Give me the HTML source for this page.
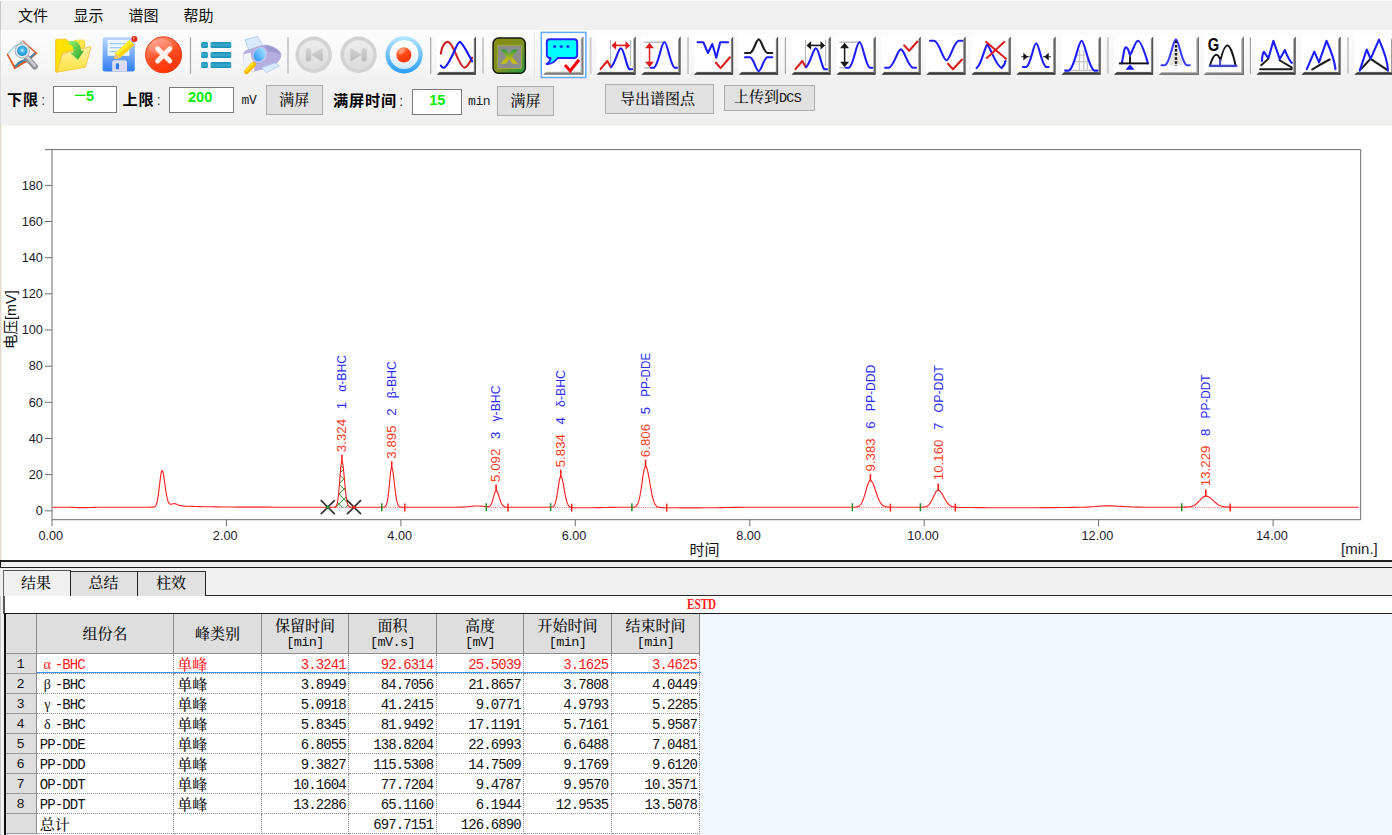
<!DOCTYPE html><html lang="zh"><head><meta charset="utf-8"><title>色谱工作站</title><style>
html,body{margin:0;padding:0}
body{width:1392px;height:835px;overflow:hidden;position:relative;background:#f0f0f0;font-family:'Liberation Sans','Noto Sans CJK SC',sans-serif;color:#000}
.abs{position:absolute}
.menu{position:absolute;top:0;left:0;width:1392px;height:30px;background:#f0f0f0}
.menu span{position:absolute;top:4.5px;font-size:15px;line-height:22px;color:#111;white-space:nowrap}
.song{font-family:'Liberation Mono','Noto Serif CJK SC',serif;font-size:15px;white-space:nowrap}
.lat{font-family:'Liberation Mono',monospace;font-size:13.6px;letter-spacing:-0.66px}
.lbl{position:absolute;font-family:'Liberation Sans','Noto Sans CJK SC',sans-serif;font-weight:bold;font-size:15.2px;letter-spacing:0.8px;line-height:20px;white-space:nowrap;color:#000}
.inp{position:absolute;background:#fff;border:1.2px solid #7a7a7a;box-sizing:border-box;text-align:center;color:#00ee00;font-family:'Liberation Sans',sans-serif;font-weight:bold;font-size:14.6px}
.btn{font-weight:500;position:absolute;background:#e1e1e1;border:1.2px solid #adadad;box-sizing:border-box;text-align:center;font-family:'Liberation Mono','Noto Serif CJK SC',serif;font-size:15px;color:#111;white-space:nowrap}
.unit{position:absolute;font-family:'Liberation Mono',monospace;font-size:13px;letter-spacing:-0.4px;color:#222;white-space:nowrap}
.tab{font-weight:500;position:absolute;box-sizing:border-box;text-align:center;font-family:'Noto Serif CJK SC',serif;font-size:15px;color:#111}
.th{font-weight:500;position:absolute;box-sizing:border-box;background:#dedede;border-right:1.2px solid #8c8c8c;border-bottom:1.2px solid #8c8c8c;text-align:center;font-family:'Liberation Mono','Noto Serif CJK SC',serif;font-size:15px;line-height:17.5px;color:#111;white-space:nowrap;overflow:hidden}
.rh{position:absolute;box-sizing:border-box;background:#dedede;border-right:1.2px solid #8c8c8c;border-bottom:1.2px solid #9a9a9a;text-align:center;font-family:'Liberation Mono',monospace;font-size:13.6px;line-height:20px;padding-top:0.8px;color:#111}
.td{position:absolute;box-sizing:border-box;background:#fff;border-right:1px dotted #8e8e8e;border-bottom:1px dotted #8e8e8e;font-family:'Liberation Mono','Noto Serif CJK SC',serif;font-size:14px;letter-spacing:-0.9px;line-height:20px;padding-top:1px;color:#111;white-space:nowrap;overflow:hidden}
.td.r{text-align:right;padding-right:2.4px}
.td.l{text-align:left;padding-left:3px}
.td .cj{font-weight:500;font-family:'Noto Serif CJK SC',serif;font-size:15px;letter-spacing:0;position:relative;top:-0.5px}
.td .gk{font-family:'Liberation Serif','Noto Serif CJK SC',serif;font-size:14px;letter-spacing:0;display:inline-block;width:15px;text-align:center}
.red{color:#ff1a1a !important}
</style></head><body>
<div class="menu"><div class="abs" style="left:0;top:0;width:1392px;height:1.2px;background:#fafafa"></div><div class="abs" style="left:0;top:1px;width:1px;height:29px;background:#c8c8c8"></div>
<span style="left:18.0px">文件</span>
<span style="left:73.5px">显示</span>
<span style="left:128.5px">谱图</span>
<span style="left:183.5px">帮助</span>
</div>
<svg width="1392" height="50" viewBox="0 30 1392 50" style="position:absolute;left:0;top:30px">
<defs>
<linearGradient id="shr" x1="0" x2="1" y1="0" y2="0"><stop offset="0" stop-color="#bdbdbd"/><stop offset="0.5" stop-color="#6a6a6a"/><stop offset="1" stop-color="#383838"/></linearGradient>
<linearGradient id="shb" x1="0" x2="0" y1="0" y2="1"><stop offset="0" stop-color="#9a9a9a"/><stop offset="0.45" stop-color="#3e3e3e"/><stop offset="1" stop-color="#2a2a2a"/></linearGradient>
<linearGradient id="shr2" x1="0" x2="1" y1="0" y2="0"><stop offset="0" stop-color="#d8d8d8"/><stop offset="1" stop-color="#5a5a5a"/></linearGradient>
<linearGradient id="shb2" x1="0" x2="0" y1="0" y2="1"><stop offset="0" stop-color="#d0d0d0"/><stop offset="1" stop-color="#505050"/></linearGradient>
<linearGradient id="shs" x1="0" x2="1" y1="0" y2="1"><stop offset="0" stop-color="#eee"/><stop offset="1" stop-color="#888"/></linearGradient>
<linearGradient id="tbg" x1="0" x2="0" y1="0" y2="1"><stop offset="0" stop-color="#fcfcfc"/><stop offset="0.75" stop-color="#f6f6f6"/><stop offset="1" stop-color="#f0f0f0"/></linearGradient>
<linearGradient id="redc" x1="0.2" x2="0.7" y1="0" y2="1"><stop offset="0" stop-color="#ff9a80"/><stop offset="0.55" stop-color="#ff4a20"/><stop offset="1" stop-color="#ff3000"/></linearGradient>
<linearGradient id="flop" x1="0" x2="0" y1="0" y2="1"><stop offset="0" stop-color="#bcd8ff"/><stop offset="1" stop-color="#2f7df0"/></linearGradient>
<linearGradient id="ring" x1="0" x2="0" y1="0" y2="1"><stop offset="0" stop-color="#b8e6ff"/><stop offset="1" stop-color="#2a9cf6"/></linearGradient>
<linearGradient id="ringin" x1="0" x2="0" y1="0" y2="1"><stop offset="0" stop-color="#ffffff"/><stop offset="0.5" stop-color="#ffffff"/><stop offset="1" stop-color="#cfe6ff"/></linearGradient>
<linearGradient id="dot" x1="0.2" x2="0.8" y1="0" y2="1"><stop offset="0" stop-color="#ff9066"/><stop offset="0.5" stop-color="#ff4612"/><stop offset="1" stop-color="#ff3200"/></linearGradient>
<linearGradient id="xl" x1="0" x2="1" y1="0" y2="1"><stop offset="0" stop-color="#8a8c12"/><stop offset="0.55" stop-color="#7d9020"/><stop offset="1" stop-color="#1fa048"/></linearGradient>
<linearGradient id="xg" x1="0" x2="0" y1="0" y2="1"><stop offset="0" stop-color="#2fa048"/><stop offset="0.6" stop-color="#b4b418"/><stop offset="1" stop-color="#c8c010"/></linearGradient>
<linearGradient id="dis" x1="0" x2="0" y1="0" y2="1"><stop offset="0" stop-color="#ececec"/><stop offset="1" stop-color="#dcdcdc"/></linearGradient>
<linearGradient id="disg" x1="0" x2="0" y1="0" y2="1"><stop offset="0" stop-color="#d2d2d2"/><stop offset="1" stop-color="#bcbcbc"/></linearGradient>
<linearGradient id="fold" x1="0" x2="0" y1="0" y2="1"><stop offset="0" stop-color="#fff2a8"/><stop offset="1" stop-color="#ffe23c"/></linearGradient>
<linearGradient id="grn" x1="0" x2="1" y1="0" y2="1"><stop offset="0" stop-color="#9cf070"/><stop offset="1" stop-color="#1fa020"/></linearGradient>
<radialGradient id="lens" cx="0.5" cy="0.45" r="0.6"><stop offset="0" stop-color="#d8f2ff"/><stop offset="0.35" stop-color="#4ab4e6"/><stop offset="1" stop-color="#1690c8"/></radialGradient>
<linearGradient id="lens2" x1="0.7" x2="0.3" y1="0" y2="1"><stop offset="0" stop-color="#a8e4ff"/><stop offset="1" stop-color="#2a96ff"/></linearGradient>
<linearGradient id="teal" x1="0" x2="0" y1="0" y2="1"><stop offset="0" stop-color="#178cb4"/><stop offset="0.5" stop-color="#3aaccc"/><stop offset="1" stop-color="#178cb4"/></linearGradient>
</defs>
<rect x="0" y="30" width="1392" height="50" fill="url(#tbg)"/>
<rect x="0" y="30" width="1" height="50" fill="#dcdcdc"/>
<rect x="189.9" y="37.3" width="1.2" height="36.4" fill="#a8a8a8"/>
<rect x="287.0" y="37.3" width="2" height="36.4" fill="#cdcdcd"/>
<rect x="430.1" y="37.3" width="1.2" height="36.4" fill="#a8a8a8"/>
<rect x="482.0" y="37.3" width="2" height="36.4" fill="#cdcdcd"/>
<rect x="589.6" y="37.3" width="2" height="36.4" fill="#cdcdcd"/>
<rect x="687.0" y="37.3" width="2" height="36.4" fill="#cdcdcd"/>
<rect x="784.8" y="37.3" width="1.2" height="36.4" fill="#a8a8a8"/>
<rect x="1106.9" y="37.3" width="2" height="36.4" fill="#cdcdcd"/>
<rect x="1249.8" y="37.3" width="1.2" height="36.4" fill="#a8a8a8"/>
<rect x="1347.0" y="37.3" width="2" height="36.4" fill="#cdcdcd"/>
<rect x="533.8" y="32" width="1" height="46" fill="#e4e4e4"/>
<g><path d="M6.6 54.3L22.9 40.2L37.6 53.3L29.4 60.4L14.4 69.6Z" fill="#e0622c"/><path d="M8 53.8L14.5 46.2C17 45 20.6 44.2 22.6 41.4L34.4 52.4C32 55.4 29.6 56.6 26.8 59.2C21.6 59.6 17.8 61.6 14.9 65.8Z" fill="#f6f8fa"/><path d="M14.9 65.8C17.8 61.6 21.6 59.6 26.8 59.2C29.6 56.6 32 55.4 34.4 52.4L35.6 53.6C33.4 56.6 31 58 28.6 60.6C23.4 61.2 19 63.4 15.8 67.8Z" fill="#2a88b2"/><path d="M8 53.8L14.5 46.2C17 45 20.6 44.2 22.6 41.4" fill="none" stroke="#9ccfe4" stroke-width="1.3"/><path d="M27 57.8L34.8 66.6" stroke="#8c9096" stroke-width="6" stroke-linecap="round"/><path d="M27.2 57L34.8 65.6" stroke="#c8ccd0" stroke-width="2.8" stroke-linecap="round"/><circle cx="22.3" cy="50.8" r="7.2" fill="#eceef2" stroke="#b2b6bc" stroke-width="1.1"/><circle cx="22.3" cy="50.8" r="5.3" fill="url(#lens)"/></g>
<g><path d="M55.6 40.5Q55.6 39.2 57 39.2L66.5 39.2L68.5 41.6L84.6 41.6L84.8 47L62 53L57.2 72L55.6 72Z" fill="#ffe200" stroke="#f2c030" stroke-width="0.9"/><path d="M74 40L84 39.6L84.4 47L74 49Z" fill="#ffe84a"/><path d="M62.6 53.8L91 46.6L85.4 67.2L56.8 72.2Z" fill="url(#fold)" stroke="#f0c440" stroke-width="0.9"/><path d="M69 41.2C75 39.5 80.5 42 81.2 51L84.2 50.6L78 59.8L70.2 53L73.6 52.4C73.6 47 72 44.5 68.6 44Z" fill="url(#grn)"/></g>
<g><rect x="102.6" y="37.3" width="32.2" height="34.3" rx="2.4" fill="url(#flop)"/><rect x="107.6" y="40" width="21.8" height="15.8" fill="#eef6ff"/><path d="M109.6 43.6H127.4M109.6 47.6H127.4M109.6 51.6H127.4" stroke="#9ccaf8" stroke-width="1.4"/><path d="M112.2 62.4Q112.2 60.2 114.4 60.2H124.8Q127 60.2 127 62.4V71.6H112.2Z" fill="#dcdcf6"/><rect x="115.8" y="63.4" width="3.2" height="5.8" fill="#2f7df0"/><path d="M114.2 58.9L115.2 53L129.6 40L134.4 44.8L120 58Z" fill="#ffd400"/><path d="M115.2 53L129.6 40L132 42.4L117.6 55.4Z" fill="#ffee30"/><path d="M114.2 58.9L115.2 53L120 58Z" fill="#f0c080"/><path d="M130.2 40.6L131.8 39.2L135.2 42.8L133.8 44.2Z" fill="#c8ccd8"/><circle cx="134.4" cy="39" r="3" fill="#e0301c"/><circle cx="133.8" cy="38.2" r="1" fill="#ff9080"/></g>
<g><circle cx="163.6" cy="54.8" r="18" fill="url(#redc)" stroke="#e83a18" stroke-width="1"/><ellipse cx="161" cy="47" rx="12" ry="8" fill="#fff" opacity="0.18"/><path d="M157.6 48.8L169.8 61M169.8 48.8L157.6 61" stroke="#fff4f0" stroke-width="4.8" stroke-linecap="round"/></g>
<rect x="201.1" y="41.9" width="6.9" height="6.1" rx="1.6" fill="url(#teal)"/><rect x="210.5" y="41.9" width="20.8" height="6.1" rx="1.6" fill="url(#teal)"/>
<rect x="201.1" y="51.9" width="6.9" height="6.1" rx="1.6" fill="url(#teal)"/><rect x="210.5" y="51.9" width="20.8" height="6.1" rx="1.6" fill="url(#teal)"/>
<rect x="201.1" y="62.0" width="6.9" height="6.1" rx="1.6" fill="url(#teal)"/><rect x="210.5" y="62.0" width="20.8" height="6.1" rx="1.6" fill="url(#teal)"/>
<g><path d="M245 39.8L257.4 36.2L262.8 45.2L249 50Z" fill="#dceaff" stroke="#a8c8f4" stroke-width="0.8"/><path d="M243.4 53.6C244 51 247 49.4 250 49L264 45C270 43.6 281.6 50 281.4 55C281.2 60 276 65.4 270 67.4L254.6 71.6C249 72 244 67 243.6 61Z" fill="#b4aede"/><path d="M243.6 54.5L250.4 52.6L254.4 64L254.2 71.4C249 71.6 244.4 67 243.8 61Z" fill="#f2f4fc"/><path d="M262 67.6L274.8 63L279.2 66L266.2 72.6Z" fill="#dceaff" stroke="#a8c8f4" stroke-width="0.8"/><path d="M264 46C270 45 279.5 50 280.4 54.6C277 52.5 270 51 265.6 52Z" fill="#9c98d0"/><path d="M253.6 64.2L246.6 71.6" stroke="#ffb800" stroke-width="5" stroke-linecap="round"/><path d="M253 63.6L246.4 70.4" stroke="#ffe000" stroke-width="2.4" stroke-linecap="round"/><ellipse cx="259.8" cy="54.8" rx="7.8" ry="9" transform="rotate(28 259.8 54.8)" fill="#c4c0e8" stroke="#a8a4d6" stroke-width="0.8"/><ellipse cx="259.6" cy="54.6" rx="5.6" ry="7" transform="rotate(28 259.6 54.6)" fill="url(#lens2)"/></g>
<g><circle cx="313.7" cy="54.8" r="18.2" fill="#d2d2d2"/><circle cx="313.7" cy="54.8" r="14.6" fill="url(#dis)"/><rect x="305.8" y="48" width="5.4" height="13.6" rx="2.4" fill="url(#disg)"/><path d="M311.9 54.8L322.2 48.6V61Z" fill="url(#disg)" stroke="url(#disg)" stroke-width="1" stroke-linejoin="round"/></g>
<g><circle cx="358.6" cy="54.8" r="18.2" fill="#d2d2d2"/><circle cx="358.6" cy="54.8" r="14.6" fill="url(#dis)"/><rect x="361.4" y="48" width="5.4" height="13.6" rx="2.4" fill="url(#disg)"/><path d="M360.8 54.8L350.8 48.6V61Z" fill="url(#disg)" stroke="url(#disg)" stroke-width="1" stroke-linejoin="round"/></g>
<g><circle cx="404.1" cy="54.8" r="18.6" fill="url(#ring)"/><circle cx="404.1" cy="54.6" r="14.4" fill="url(#ringin)"/><circle cx="403.8" cy="54.8" r="7.6" fill="url(#dot)"/><ellipse cx="401.6" cy="51.4" rx="3.6" ry="2.4" transform="rotate(-35 401.6 51.4)" fill="#fff" opacity="0.3"/></g>
<g transform="translate(436.8 35.4)"><path d="M36.6 3.9L39.2 1.1V39.2H36.6Z" fill="url(#shr)"/><path d="M0 39.4L3.2 36.1H36.6L39.2 39.4Z" fill="url(#shb)"/><rect x="0" y="0" width="36.6" height="36.3" fill="#fff"/><path d="M4 18.3C5 10 8.5 6.3 11.2 6.5C15 7 18.5 18 21.5 24C24.5 30 26.5 32.4 27.7 32.3C30 32 33 27 35.3 22.3" fill="none" stroke="#c8201e" stroke-width="2.1" stroke-linecap="round" stroke-linejoin="round" /><path d="M4 30.2C5 32 6.5 32.6 7.8 32.1C10 31.4 13.5 24 16.5 18C19.5 11 21.6 6.4 23 6.5C25.6 7 31 18 35.3 25.9" fill="none" stroke="#1414ff" stroke-width="2.1" stroke-linecap="round" stroke-linejoin="round" /></g>
<g><rect x="493.1" y="38.1" width="32.2" height="35.2" rx="5.4" fill="url(#xl)" stroke="#141a10" stroke-width="1.5"/><rect x="497.6" y="45.2" width="23.8" height="23.3" fill="#8c8c8c" stroke="#a0a838" stroke-width="0.9"/><path d="M500.6 49.6H506L509.3 54.2L512.6 49.6H518L512.2 56.7L518 63.8H512.6L509.3 59.2L506 63.8H500.6L506.4 56.7Z" fill="url(#xg)"/></g>
<rect x="541.3" y="32.4" width="44.6" height="45.1" fill="#fff" stroke="#62aaff" stroke-width="1.5"/>
<g transform="translate(543.4 35.2)"><path d="M37 4.2L39.9 1.2V39.4H0L3 36.4H37Z" fill="url(#shs)"/><path d="M37 4.2L39.9 1.2V39.4H37Z" fill="url(#shr2)"/><path d="M0 39.4L3 36.4H37L39.9 39.4Z" fill="url(#shb2)"/><rect x="0" y="0" width="37" height="36.4" fill="#fff"/><path d="M6.6 4H30.6Q33.8 4 33.8 7.2V19.6Q33.8 22.8 30.6 22.8H14.2C11.5 26.5 7.6 29.2 3.2 28.8C6 27 7 25 7.2 22.8H6.6Q3.4 22.8 3.4 19.6V7.2Q3.4 4 6.6 4Z" fill="#00ffff" stroke="#2424ff" stroke-width="1.9" stroke-linejoin="round"/><circle cx="11.2" cy="11.3" r="1.6" fill="#1c3cff"/><circle cx="17.9" cy="11.3" r="1.6" fill="#1c3cff"/><circle cx="24.5" cy="11.3" r="1.6" fill="#1c3cff"/><path d="M21.6 29.8L26.8 35.8L35.6 24.6" fill="none" stroke="#ff0000" stroke-width="3" stroke-linejoin="miter"/></g>
<g transform="translate(596.5 35.4)"><path d="M36.6 3.9L39.2 1.1V39.2H36.6Z" fill="url(#shr)"/><path d="M0 39.4L3.2 36.1H36.6L39.2 39.4Z" fill="url(#shb)"/><rect x="0" y="0" width="36.6" height="36.3" fill="#fff"/><path d="M14 4.7V30.5M34.1 4.7V30.5" stroke="#b4bac0" stroke-width="1.1" fill="none"/><path d="M4 33.8L10.8 25.6L14.4 31.8" fill="none" stroke="#dc1c1c" stroke-width="2.1" stroke-linecap="round" stroke-linejoin="round" /><path d="M14.4 31.8C19 28 21.5 13 24.4 13C27.5 13 29.5 30 32.7 33.8H35.6" fill="none" stroke="#1d1dff" stroke-width="2.1" stroke-linecap="round" stroke-linejoin="round" /><path d="M18 10H31" stroke="#dc1c1c" stroke-width="1.6"/><path d="M15 10L19.6 5.6V14.4ZM33.6 10L29 5.6V14.4Z" fill="#dc1c1c"/></g>
<g transform="translate(641.4 35.4)"><path d="M36.6 3.9L39.2 1.1V39.2H36.6Z" fill="url(#shr)"/><path d="M0 39.4L3.2 36.1H36.6L39.2 39.4Z" fill="url(#shb)"/><rect x="0" y="0" width="36.6" height="36.3" fill="#fff"/><path d="M2.9 6.8H22.6M2.9 32.3H9.7" stroke="#b8bcc0" stroke-width="1.4" fill="none"/><path d="M9.4 32.3H12.6C17 30 20 6.6 23 6.6C26 6.6 29 30 33.2 32.3H35.8" fill="none" stroke="#1d1dff" stroke-width="2.1" stroke-linecap="round" stroke-linejoin="round" /><path d="M8.1 11V28" stroke="#dc1c1c" stroke-width="1.5"/><path d="M8.1 7.3L12.6 12.8H3.6ZM8.1 31.8L12.6 26.3H3.6Z" fill="#dc1c1c"/></g>
<g transform="translate(694.0 35.4)"><path d="M36.6 3.9L39.2 1.1V39.2H36.6Z" fill="url(#shr)"/><path d="M0 39.4L3.2 36.1H36.6L39.2 39.4Z" fill="url(#shb)"/><rect x="0" y="0" width="36.6" height="36.3" fill="#fff"/><path d="M3.6 6.8H9.3L14 17.6L18.3 8.6L22.3 22.3L26.2 6.8H34.1" fill="none" stroke="#1d1dff" stroke-width="2.1" stroke-linecap="round" stroke-linejoin="round" /><path d="M21.9 27.3L26.6 32.7L35.9 21.9" fill="none" stroke="#dc1c1c" stroke-width="2.1" stroke-linecap="round" stroke-linejoin="round" /></g>
<g transform="translate(738.9 35.4)"><path d="M36.6 3.9L39.2 1.1V39.2H36.6Z" fill="url(#shr)"/><path d="M0 39.4L3.2 36.1H36.6L39.2 39.4Z" fill="url(#shb)"/><rect x="0" y="0" width="36.6" height="36.3" fill="#fff"/><path d="M6.1 17.6H11C15 17 17 4 19.8 4C22.6 4 24.6 17 28.6 17.6H33.4" fill="none" stroke="#1a1a1a" stroke-width="2.1" stroke-linecap="round" stroke-linejoin="round" /><path d="M6.1 21.9H11C15 22.5 17 35.6 19.8 35.6C22.6 35.6 24.6 22.5 28.6 21.9H33.4" fill="none" stroke="#1d1dff" stroke-width="2.1" stroke-linecap="round" stroke-linejoin="round" /></g>
<g transform="translate(791.5 35.4)"><path d="M36.6 3.9L39.2 1.1V39.2H36.6Z" fill="url(#shr)"/><path d="M0 39.4L3.2 36.1H36.6L39.2 39.4Z" fill="url(#shb)"/><rect x="0" y="0" width="36.6" height="36.3" fill="#fff"/><path d="M14 4.7V30.5M34.1 4.7V30.5" stroke="#b4bac0" stroke-width="1.1" fill="none"/><path d="M4 33.8L10.8 25.6L14.4 31.8" fill="none" stroke="#dc1c1c" stroke-width="2.1" stroke-linecap="round" stroke-linejoin="round" /><path d="M14.4 31.8C19 28 21.5 13 24.4 13C27.5 13 29.5 30 32.7 33.8H35.6" fill="none" stroke="#1d1dff" stroke-width="2.1" stroke-linecap="round" stroke-linejoin="round" /><path d="M18 10H31" stroke="#1a1a1a" stroke-width="1.6"/><path d="M15 10L19.6 5.6V14.4ZM33.6 10L29 5.6V14.4Z" fill="#1a1a1a"/></g>
<g transform="translate(836.5 35.4)"><path d="M36.6 3.9L39.2 1.1V39.2H36.6Z" fill="url(#shr)"/><path d="M0 39.4L3.2 36.1H36.6L39.2 39.4Z" fill="url(#shb)"/><rect x="0" y="0" width="36.6" height="36.3" fill="#fff"/><path d="M2.9 6.8H22.6M2.9 32.3H9.7" stroke="#b8bcc0" stroke-width="1.4" fill="none"/><path d="M9.4 32.3H12.6C17 30 20 6.6 23 6.6C26 6.6 29 30 33.2 32.3H35.8" fill="none" stroke="#1d1dff" stroke-width="2.1" stroke-linecap="round" stroke-linejoin="round" /><path d="M8.1 11V28" stroke="#1a1a1a" stroke-width="1.5"/><path d="M8.1 7.3L12.6 12.8H3.6ZM8.1 31.8L12.6 26.3H3.6Z" fill="#1a1a1a"/></g>
<g transform="translate(881.5 35.4)"><path d="M36.6 3.9L39.2 1.1V39.2H36.6Z" fill="url(#shr)"/><path d="M0 39.4L3.2 36.1H36.6L39.2 39.4Z" fill="url(#shb)"/><rect x="0" y="0" width="36.6" height="36.3" fill="#fff"/><path d="M3.6 32.3H7.4C12.5 31 16 14 19.4 14C22.8 14 26.3 31 31.4 32.3H34.5" fill="none" stroke="#1d1dff" stroke-width="2.1" stroke-linecap="round" stroke-linejoin="round" /><path d="M22.6 10L27.7 15.4L35.9 6.1" fill="none" stroke="#dc1c1c" stroke-width="2.1" stroke-linecap="round" stroke-linejoin="round" /></g>
<g transform="translate(926.4 35.4)"><path d="M36.6 3.9L39.2 1.1V39.2H36.6Z" fill="url(#shr)"/><path d="M0 39.4L3.2 36.1H36.6L39.2 39.4Z" fill="url(#shb)"/><rect x="0" y="0" width="36.6" height="36.3" fill="#fff"/><path d="M3.6 5.4H7.8C13 6.5 16.5 24.8 20.1 24.8C23.7 24.8 27.2 6.5 32.4 5.4H35.9" fill="none" stroke="#1d1dff" stroke-width="2.1" stroke-linecap="round" stroke-linejoin="round" /><path d="M21.6 28.4L26.6 33.8L35.6 24.1" fill="none" stroke="#dc1c1c" stroke-width="2.1" stroke-linecap="round" stroke-linejoin="round" /></g>
<g transform="translate(971.5 35.4)"><path d="M36.6 3.9L39.2 1.1V39.2H36.6Z" fill="url(#shr)"/><path d="M0 39.4L3.2 36.1H36.6L39.2 39.4Z" fill="url(#shb)"/><rect x="0" y="0" width="36.6" height="36.3" fill="#fff"/><path d="M5 32.7C10 30 12.8 12 15.8 9C19 12 24 30 30.2 32.7C32 31 33.4 28 34.1 25.5" fill="none" stroke="#1d1dff" stroke-width="2.1" stroke-linecap="round" stroke-linejoin="round" /><path d="M14.7 6.5L34.5 23.3M32.7 6.5L15.4 22.6" fill="none" stroke="#dc1c1c" stroke-width="2.0" stroke-linecap="round" stroke-linejoin="round" /></g>
<g transform="translate(1016.4 35.4)"><path d="M36.6 3.9L39.2 1.1V39.2H36.6Z" fill="url(#shr)"/><path d="M0 39.4L3.2 36.1H36.6L39.2 39.4Z" fill="url(#shb)"/><rect x="0" y="0" width="36.6" height="36.3" fill="#fff"/><path d="M6.5 31.6H9.8C14.5 30 17 7.9 19.8 7.9C22.6 7.9 25.1 30 29.8 31.6H32.3" fill="none" stroke="#1d1dff" stroke-width="2.1" stroke-linecap="round" stroke-linejoin="round" /><path d="M5 21.3H13.3M26.6 21.3H34.5" stroke="#222" stroke-width="1.1"/><path d="M11.3 21.3L7 17.4V25.2ZM28 21.3L32.3 17.4V25.2Z" fill="#111"/></g>
<g transform="translate(1061.5 35.4)"><path d="M36.6 3.9L39.2 1.1V39.2H36.6Z" fill="url(#shr)"/><path d="M0 39.4L3.2 36.1H36.6L39.2 39.4Z" fill="url(#shb)"/><rect x="0" y="0" width="36.6" height="36.3" fill="#fff"/><path d="M18 14.7V35M22.3 14.7V35M25.9 20V35M15.8 19.8H23.7M12.9 26.2H27M8 35H32" stroke="#c4c4c4" stroke-width="1.3" fill="none"/><path d="M3.6 35.2H7.4C13 33 17 5.4 20.1 5.4C23.2 5.4 27.2 33 32.8 35.2H35.9" fill="none" stroke="#1d1dff" stroke-width="2.1" stroke-linecap="round" stroke-linejoin="round" /></g>
<g transform="translate(1114.0 35.4)"><path d="M36.6 3.9L39.2 1.1V39.2H36.6Z" fill="url(#shr)"/><path d="M0 39.4L3.2 36.1H36.6L39.2 39.4Z" fill="url(#shb)"/><rect x="0" y="0" width="36.6" height="36.3" fill="#fff"/><path d="M7.8 28C9.5 20 10 12 12.1 12C14 12 15 17 16 19.8C19 15 21.5 5.4 23.9 5.4C26.5 5.4 31 18 34 28" fill="none" stroke="#1d1dff" stroke-width="2.1" stroke-linecap="round" stroke-linejoin="round" /><path d="M4.9 28H34.3" stroke="#111" stroke-width="1.9"/><path d="M16 20.8V28.4" stroke="#111" stroke-width="1.9"/><path d="M16 29.2L20.6 34.4H11.4Z" fill="#1414ff"/></g>
<g transform="translate(1159.0 35.4)"><path d="M37 4.2L39.9 1.2V39.4H0L3 36.4H37Z" fill="url(#shs)"/><path d="M37 4.2L39.9 1.2V39.4H37Z" fill="url(#shr2)"/><path d="M0 39.4L3 36.4H37L39.9 39.4Z" fill="url(#shb2)"/><rect x="0" y="0" width="37" height="36.4" fill="#fff"/><path d="M16.9 8L24 29.8H9.8Z" fill="#e4e4dc"/><path d="M2.5 29.8H6C11 28.5 14 4 16.9 4C19.8 4 22.8 28.5 27.8 29.8H30.9" fill="none" stroke="#3c3cff" stroke-width="2.1" stroke-linecap="round" stroke-linejoin="round" /><path d="M17 5.4V30.6" stroke="#111" stroke-width="2.4" stroke-dasharray="2.5 1.6"/></g>
<g transform="translate(1203.9 35.4)"><path d="M37 4.2L39.9 1.2V39.4H0L3 36.4H37Z" fill="url(#shs)"/><path d="M37 4.2L39.9 1.2V39.4H37Z" fill="url(#shr2)"/><path d="M0 39.4L3 36.4H37L39.9 39.4Z" fill="url(#shb2)"/><rect x="0" y="0" width="37" height="36.4" fill="#fff"/><text x="3.8" y="15.2" font-family="'Liberation Sans',sans-serif" font-weight="bold" font-size="18.5px" fill="#000" textLength="11.4" lengthAdjust="spacingAndGlyphs">G</text><path d="M6.1 29.8C8 24 10 19.4 12.2 19.4C14.3 19.4 15.6 22 16.5 24.8C18.5 17 20.8 10 23.3 10C26.5 10 30 22 31.6 29.8" fill="none" stroke="#151515" stroke-width="1.9" stroke-linecap="round" stroke-linejoin="round" /><path d="M5 30.5H33.4" stroke="#4444c8" stroke-width="2.4"/><path d="M16.2 24V30.5" stroke="#4444c8" stroke-width="2"/></g>
<g transform="translate(1256.5 35.4)"><path d="M36.6 3.9L39.2 1.1V39.2H36.6Z" fill="url(#shr)"/><path d="M0 39.4L3.2 36.1H36.6L39.2 39.4Z" fill="url(#shb)"/><rect x="0" y="0" width="36.6" height="36.3" fill="#fff"/><path d="M5.4 25.5C5.6 21 6.4 17.5 7.5 16.5L11.9 23L16.9 5.4L23.3 23.7L28.4 14.7C30.5 20 33 25.5 35.4 27.5" fill="none" stroke="#1d1dff" stroke-width="2.1" stroke-linecap="round" stroke-linejoin="round" /><path d="M4.7 29.8L11.5 23.7M23 24.8L35.2 32V33.8H3.6" fill="none" stroke="#1a1a1a" stroke-width="1.9" stroke-linecap="round" stroke-linejoin="round" /></g>
<g transform="translate(1301.4 35.4)"><path d="M36.6 3.9L39.2 1.1V39.2H36.6Z" fill="url(#shr)"/><path d="M0 39.4L3.2 36.1H36.6L39.2 39.4Z" fill="url(#shb)"/><rect x="0" y="0" width="36.6" height="36.3" fill="#fff"/><path d="M5.4 33.8L12.9 16.2L17.6 26.9L25.1 5.4C28.5 13 33 24 34.1 33.8" fill="none" stroke="#1d1dff" stroke-width="2.1" stroke-linecap="round" stroke-linejoin="round" /><path d="M10.8 34.1C16 31 23 26.5 28.4 24.1" fill="none" stroke="#1a1a1a" stroke-width="2.0" stroke-linecap="round" stroke-linejoin="round" /></g>
<g transform="translate(1354.4 35.4)"><path d="M36.6 3.9L39.2 1.1V39.2H36.6Z" fill="url(#shr)"/><path d="M0 39.4L3.2 36.1H36.6L39.2 39.4Z" fill="url(#shb)"/><rect x="0" y="0" width="36.6" height="36.3" fill="#fff"/><path d="M5.4 35L16.2 23.4L33.5 35" fill="none" stroke="#1a1a1a" stroke-width="2.0" stroke-linecap="round" stroke-linejoin="round" /><path d="M5.4 35L12.3 14.1L16.2 23.4L24.6 4.2C28 12 33.5 26 33.5 35" fill="none" stroke="#1d1dff" stroke-width="2.1" stroke-linecap="round" stroke-linejoin="round" /></g>
</svg>
<div class="abs" style="left:0;top:80px;width:1px;height:45px;background:#dcdcdc"></div>
<div class="lbl" style="left:7px;top:89.5px">下限<span style="padding-left:2.2px;font-weight:normal;color:#333;font-size:14px;letter-spacing:0">:</span></div>
<div class="inp" style="left:52.6px;top:86.2px;width:64.8px;height:26.4px;line-height:19px"><span style="display:inline-block;transform:scaleX(1.5) translateY(-1px);margin-right:1.5px;font-weight:normal">−</span>5</div>
<div class="lbl" style="left:122.5px;top:90px">上限<span style="padding-left:2.2px;font-weight:normal;color:#333;font-size:14px;letter-spacing:0">:</span></div>
<div class="inp" style="left:168.6px;top:87.4px;width:65px;height:26px;line-height:19.5px;text-indent:-2px">200</div>
<div class="unit" style="left:241.5px;top:92.5px">mV</div>
<div class="btn" style="left:266px;top:85.2px;width:56.6px;height:29.6px;line-height:32px">满屏</div>
<div class="lbl" style="left:333px;top:90.5px">满屏时间<span style="padding-left:2.2px;font-weight:normal;color:#333;font-size:14px;letter-spacing:0">:</span></div>
<div class="inp" style="left:412.4px;top:88.6px;width:49.8px;height:26.2px;line-height:20px">15</div>
<div class="unit" style="left:468px;top:93.5px">min</div>
<div class="btn" style="left:497.4px;top:86.2px;width:56.4px;height:29.6px;line-height:32px">满屏</div>
<div class="btn" style="left:605px;top:83.8px;width:108.8px;height:30px;line-height:32.5px;text-indent:-4px">导出谱图点</div>
<div class="btn" style="left:723.6px;top:85px;width:91.2px;height:26px;line-height:26.5px;text-indent:-3.4px">上传到<span class="lat" style="font-size:13.4px">DCS</span></div>
<svg class="chart" width="1392" height="435" viewBox="0 125 1392 435" style="position:absolute;left:0;top:125px">
<rect x="0" y="125" width="1392" height="436" fill="#fff"/>
<rect x="0" y="125" width="1392" height="1" fill="#fdf3e6"/>
<rect x="0" y="125" width="1.4" height="436" fill="#e3d9c8"/>
<g stroke="#6e6e6e" stroke-width="1" fill="none">
<path d="M45 149.6H1360.7V519.7H52V149.6"/>
<path d="M45 510.8H52"/>
<path d="M45 474.6H52"/>
<path d="M45 438.5H52"/>
<path d="M45 402.3H52"/>
<path d="M45 366.2H52"/>
<path d="M45 330.0H52"/>
<path d="M45 293.8H52"/>
<path d="M45 257.7H52"/>
<path d="M45 221.5H52"/>
<path d="M45 185.4H52"/>
<path d="M52.0 519.7V526.3"/>
<path d="M226.4 519.7V526.3"/>
<path d="M400.9 519.7V526.3"/>
<path d="M575.3 519.7V526.3"/>
<path d="M749.8 519.7V526.3"/>
<path d="M924.2 519.7V526.3"/>
<path d="M1098.6 519.7V526.3"/>
<path d="M1273.1 519.7V526.3"/>
</g>
<g font-family="'Liberation Sans',sans-serif" font-size="12.7px" fill="#1c1c2c">
<text x="42.8" y="515.0" text-anchor="end">0</text>
<text x="42.8" y="478.8" text-anchor="end">20</text>
<text x="42.8" y="442.7" text-anchor="end">40</text>
<text x="42.8" y="406.5" text-anchor="end">60</text>
<text x="42.8" y="370.4" text-anchor="end">80</text>
<text x="42.8" y="334.2" text-anchor="end">100</text>
<text x="42.8" y="298.0" text-anchor="end">120</text>
<text x="42.8" y="261.9" text-anchor="end">140</text>
<text x="42.8" y="225.7" text-anchor="end">160</text>
<text x="42.8" y="189.6" text-anchor="end">180</text>
<text x="50.8" y="540" text-anchor="middle">0.00</text>
<text x="225.2" y="540" text-anchor="middle">2.00</text>
<text x="399.7" y="540" text-anchor="middle">4.00</text>
<text x="574.1" y="540" text-anchor="middle">6.00</text>
<text x="748.6" y="540" text-anchor="middle">8.00</text>
<text x="923.0" y="540" text-anchor="middle">10.00</text>
<text x="1097.4" y="540" text-anchor="middle">12.00</text>
<text x="1271.9" y="540" text-anchor="middle">14.00</text>
<text x="1359.4" y="554.4" text-anchor="middle" font-size="15px">[min.]</text>
</g>
<text x="704.5" y="554.6" text-anchor="middle" font-family="'Liberation Sans','Noto Sans CJK SC',sans-serif" font-size="15px" fill="#111">时间</text>
<text transform="translate(16.2 319.6) rotate(-90)" text-anchor="middle" font-family="'Liberation Sans','Noto Sans CJK SC',sans-serif" font-size="14.8px" fill="#111" textLength="58.6" lengthAdjust="spacingAndGlyphs">电压[mV]</text>
<clipPath id="pk1"><path d="M327.8 507.8 L327.8 507.5 L328.3 507.5 L328.8 507.5 L329.3 507.5 L329.8 507.5 L330.3 507.5 L330.8 507.5 L331.3 507.5 L331.8 507.5 L332.3 507.5 L332.8 507.5 L333.3 507.5 L333.8 507.5 L334.3 507.4 L334.8 507.3 L335.3 507.1 L335.8 506.8 L336.3 506.1 L336.8 505.0 L337.3 503.2 L337.8 500.5 L338.3 496.7 L338.8 491.8 L339.3 485.9 L339.8 479.3 L340.3 472.8 L340.8 467.1 L341.3 463.1 L341.8 461.4 L342.3 462.0 L342.8 464.4 L343.3 468.3 L343.8 473.2 L344.3 478.8 L344.8 484.4 L345.3 489.6 L345.8 494.2 L346.3 498.0 L346.8 501.0 L347.3 503.2 L347.8 504.8 L348.3 505.9 L348.8 506.5 L349.3 507.0 L349.8 507.2 L350.3 507.3 L350.8 507.4 L351.3 507.4 L351.8 507.5 L352.3 507.5 L352.8 507.5 L353.3 507.5 L353.8 507.5 L354.0 507.8Z"/></clipPath>
<g clip-path="url(#pk1)" stroke="#2c982c" stroke-width="1" fill="none">
<path d="M320 395.2L365 440.2"/>
<path d="M320 433.0L365 388.0"/>
<path d="M320 405.2L365 450.2"/>
<path d="M320 443.0L365 398.0"/>
<path d="M320 415.2L365 460.2"/>
<path d="M320 453.0L365 408.0"/>
<path d="M320 425.2L365 470.2"/>
<path d="M320 463.0L365 418.0"/>
<path d="M320 435.2L365 480.2"/>
<path d="M320 473.0L365 428.0"/>
<path d="M320 445.2L365 490.2"/>
<path d="M320 483.0L365 438.0"/>
<path d="M320 455.2L365 500.2"/>
<path d="M320 493.0L365 448.0"/>
<path d="M320 465.2L365 510.2"/>
<path d="M320 503.0L365 458.0"/>
<path d="M320 475.2L365 520.2"/>
<path d="M320 513.0L365 468.0"/>
<path d="M320 485.2L365 530.2"/>
<path d="M320 523.0L365 478.0"/>
<path d="M320 495.2L365 540.2"/>
<path d="M320 533.0L365 488.0"/>
<path d="M320 505.2L365 550.2"/>
<path d="M320 543.0L365 498.0"/>
</g>
<g stroke="#ff5a5a" stroke-width="1" stroke-dasharray="1 1.2" fill="none">
<path d="M327.8 507.6H354.0"/>
<path d="M381.8 507.6H404.8"/>
<path d="M486.3 507.6H508.0"/>
<path d="M550.6 507.6H571.7"/>
<path d="M631.9 507.6H666.7"/>
<path d="M852.4 507.6H890.4"/>
<path d="M920.4 507.6H955.3"/>
<path d="M1181.8 507.6H1230.2"/>
</g>
<path d="M52.3 507.2 L58.3 507.2 L64.3 507.2 L67.3 507.3 L69.3 507.3 L71.3 507.4 L72.8 507.4 L74.3 507.5 L75.8 507.5 L77.3 507.6 L79.3 507.6 L85.3 507.6 L87.8 507.6 L89.8 507.5 L91.8 507.5 L93.3 507.4 L94.8 507.4 L96.8 507.3 L98.8 507.3 L101.3 507.3 L104.8 507.2 L110.8 507.2 L116.8 507.2 L122.8 507.2 L128.8 507.2 L134.8 507.2 L140.8 507.2 L146.8 507.2 L152.8 507.1 L153.3 507.1 L153.8 507.0 L154.3 506.9 L154.8 506.6 L155.3 506.2 L155.8 505.5 L156.3 504.5 L156.8 503.0 L157.3 501.0 L157.8 498.4 L158.3 495.1 L158.8 491.3 L159.3 487.0 L159.8 482.7 L160.3 478.5 L160.8 474.8 L161.3 472.2 L161.8 470.7 L162.3 470.6 L162.8 471.6 L163.3 473.6 L163.8 476.4 L164.3 479.8 L164.8 483.5 L165.3 487.4 L165.8 490.7 L166.3 493.7 L166.8 496.4 L167.3 498.7 L167.8 500.5 L168.3 501.9 L168.8 502.9 L169.3 503.6 L169.8 504.1 L170.3 504.3 L170.8 504.3 L171.3 504.3 L171.8 504.1 L172.3 504.0 L172.8 503.8 L173.3 503.7 L173.8 503.6 L174.8 503.7 L175.3 503.8 L175.8 503.9 L176.3 504.1 L176.8 504.3 L177.3 504.6 L177.8 504.8 L178.3 505.0 L178.8 505.2 L179.3 505.4 L179.8 505.5 L180.3 505.6 L180.8 505.7 L181.3 505.8 L181.8 505.9 L182.3 506.0 L182.8 506.0 L183.8 506.1 L184.8 506.1 L185.8 506.2 L186.8 506.2 L188.3 506.3 L189.8 506.3 L191.3 506.4 L192.8 506.4 L194.3 506.5 L195.8 506.5 L197.3 506.5 L199.3 506.6 L201.3 506.6 L203.3 506.7 L205.8 506.7 L208.3 506.8 L211.3 506.8 L214.3 506.9 L217.8 506.9 L221.8 507.0 L226.8 507.0 L232.8 507.0 L238.8 507.1 L244.8 507.1 L250.8 507.1 L256.8 507.1 L262.8 507.1 L268.8 507.1 L274.8 507.2 L280.8 507.2 L286.8 507.2 L292.8 507.2 L298.8 507.2 L304.8 507.2 L310.8 507.2 L316.8 507.2 L322.8 507.2 L328.8 507.2 L334.3 507.1 L334.8 507.0 L335.3 506.9 L335.8 506.5 L336.3 505.9 L336.8 504.8 L337.3 503.1 L337.8 500.4 L338.3 496.7 L338.8 491.9 L339.3 486.0 L339.8 479.4 L340.3 472.9 L340.8 467.2 L341.3 463.0 L341.8 461.2 L342.3 461.6 L342.8 463.9 L343.3 467.7 L343.8 472.6 L344.3 478.1 L344.8 483.7 L345.3 489.0 L345.8 493.6 L346.3 497.5 L346.8 500.5 L347.3 502.8 L347.8 504.4 L348.3 505.5 L348.8 506.2 L349.3 506.6 L349.8 506.9 L350.3 507.0 L350.8 507.1 L351.8 507.2 L357.8 507.2 L363.8 507.2 L369.8 507.2 L375.8 507.2 L381.8 507.2 L383.8 507.1 L384.3 507.0 L384.8 506.8 L385.3 506.5 L385.8 506.0 L386.3 505.0 L386.8 503.6 L387.3 501.5 L387.8 498.6 L388.3 494.8 L388.8 490.2 L389.3 485.1 L389.8 479.8 L390.3 474.8 L390.8 470.8 L391.3 468.3 L391.8 467.7 L392.3 468.6 L392.8 470.8 L393.3 474.1 L393.8 478.1 L394.3 482.5 L394.8 487.0 L395.3 491.3 L395.8 495.1 L396.3 498.3 L396.8 500.9 L397.3 502.9 L397.8 504.3 L398.3 505.4 L398.8 506.1 L399.3 506.5 L399.8 506.8 L400.3 507.0 L400.8 507.1 L401.3 507.1 L402.3 507.2 L408.3 507.2 L414.3 507.2 L420.3 507.2 L426.3 507.2 L432.3 507.2 L438.3 507.2 L444.3 507.2 L450.3 507.2 L456.3 507.2 L461.3 507.1 L462.8 507.1 L463.8 507.1 L464.8 507.0 L465.8 506.9 L466.8 506.8 L467.3 506.8 L467.8 506.8 L468.3 506.7 L468.8 506.6 L469.3 506.6 L469.8 506.5 L470.3 506.5 L470.8 506.4 L471.3 506.3 L471.8 506.3 L472.3 506.2 L472.8 506.2 L473.3 506.1 L473.8 506.1 L474.3 506.0 L475.3 506.0 L479.3 506.0 L480.3 506.1 L480.8 506.1 L481.3 506.2 L481.8 506.2 L482.3 506.3 L482.8 506.3 L483.3 506.4 L483.8 506.4 L484.3 506.5 L484.8 506.5 L485.3 506.6 L485.8 506.6 L486.3 506.7 L487.3 506.7 L488.3 506.7 L488.8 506.5 L489.3 506.4 L489.8 506.0 L490.3 505.6 L490.8 504.9 L491.3 504.0 L491.8 502.8 L492.3 501.4 L492.8 499.7 L493.3 497.9 L493.8 496.0 L494.3 494.2 L494.8 492.7 L495.3 491.5 L495.8 490.9 L496.3 490.8 L496.8 491.1 L497.3 491.9 L497.8 493.0 L498.3 494.3 L498.8 495.8 L499.3 497.4 L499.8 499.0 L500.3 500.5 L500.8 501.9 L501.3 503.1 L501.8 504.1 L502.3 504.9 L502.8 505.5 L503.3 506.0 L503.8 506.4 L504.3 506.7 L504.8 506.8 L505.3 507.0 L505.8 507.1 L506.3 507.1 L507.3 507.2 L513.8 507.2 L519.8 507.2 L525.8 507.2 L531.8 507.2 L537.8 507.2 L543.8 507.2 L549.8 507.3 L551.3 507.2 L551.8 507.1 L552.3 507.0 L552.8 506.8 L553.3 506.5 L553.8 506.1 L554.3 505.4 L554.8 504.4 L555.3 503.1 L555.8 501.4 L556.3 499.2 L556.8 496.6 L557.3 493.7 L557.8 490.4 L558.3 487.0 L558.8 483.8 L559.3 480.9 L559.8 478.5 L560.3 477.0 L560.8 476.5 L561.3 476.8 L561.8 477.8 L562.3 479.4 L562.8 481.6 L563.3 484.1 L563.8 486.9 L564.3 489.8 L564.8 492.6 L565.3 495.3 L565.8 497.7 L566.3 499.8 L566.8 501.6 L567.3 503.1 L567.8 504.3 L568.3 505.2 L568.8 505.9 L569.3 506.5 L569.8 506.8 L570.3 507.1 L570.8 507.3 L571.3 507.4 L571.8 507.5 L572.3 507.5 L573.3 507.6 L574.8 507.7 L577.8 507.7 L583.8 507.7 L589.8 507.7 L594.3 507.7 L597.8 507.6 L600.8 507.6 L603.8 507.5 L606.8 507.5 L609.8 507.4 L612.8 507.4 L616.3 507.3 L621.3 507.3 L627.3 507.3 L632.8 507.2 L633.8 507.1 L634.3 507.0 L634.8 506.9 L635.3 506.7 L635.8 506.4 L636.3 506.0 L636.8 505.4 L637.3 504.7 L637.8 503.7 L638.3 502.4 L638.8 500.8 L639.3 498.9 L639.8 496.6 L640.3 494.0 L640.8 491.0 L641.3 487.8 L641.8 484.3 L642.3 480.8 L642.8 477.4 L643.3 474.2 L643.8 471.4 L644.3 469.1 L644.8 467.4 L645.3 466.5 L645.8 466.4 L646.3 466.9 L646.8 467.9 L647.3 469.5 L647.8 471.6 L648.3 474.0 L648.8 476.7 L649.3 479.5 L649.8 482.5 L650.3 485.4 L650.8 488.3 L651.3 491.1 L651.8 493.6 L652.3 496.0 L652.8 498.0 L653.3 499.8 L653.8 501.4 L654.3 502.7 L654.8 503.8 L655.3 504.7 L655.8 505.4 L656.3 505.9 L656.8 506.4 L657.3 506.7 L657.8 506.9 L658.3 507.1 L658.8 507.3 L659.3 507.4 L659.8 507.4 L660.3 507.5 L661.3 507.6 L662.8 507.6 L664.8 507.7 L667.3 507.7 L670.3 507.7 L673.3 507.8 L676.8 507.8 L681.3 507.9 L687.3 507.9 L693.3 507.9 L699.3 507.9 L703.8 507.8 L707.3 507.8 L710.8 507.7 L713.8 507.7 L716.8 507.7 L719.8 507.6 L722.8 507.6 L725.8 507.5 L728.8 507.5 L732.3 507.4 L735.8 507.4 L739.8 507.4 L744.8 507.3 L750.8 507.3 L756.8 507.2 L762.8 507.2 L768.8 507.2 L774.8 507.2 L780.8 507.2 L786.8 507.2 L792.8 507.2 L798.8 507.2 L804.8 507.2 L810.8 507.2 L816.8 507.2 L822.8 507.2 L828.8 507.2 L834.8 507.2 L840.8 507.2 L846.8 507.2 L852.8 507.2 L854.8 507.1 L855.8 507.0 L856.3 507.0 L856.8 506.9 L857.3 506.8 L857.8 506.6 L858.3 506.4 L858.8 506.2 L859.3 505.8 L859.8 505.4 L860.3 504.9 L860.8 504.3 L861.3 503.6 L861.8 502.7 L862.3 501.7 L862.8 500.6 L863.3 499.3 L863.8 497.9 L864.3 496.3 L864.8 494.7 L865.3 493.0 L865.8 491.2 L866.3 489.4 L866.8 487.7 L867.3 486.0 L867.8 484.5 L868.3 483.2 L868.8 482.1 L869.3 481.3 L869.8 480.7 L870.3 480.5 L870.8 480.6 L871.3 480.9 L871.8 481.4 L872.3 482.2 L872.8 483.1 L873.3 484.2 L873.8 485.4 L874.3 486.8 L874.8 488.2 L875.3 489.7 L875.8 491.2 L876.3 492.7 L876.8 494.2 L877.3 495.6 L877.8 497.0 L878.3 498.3 L878.8 499.4 L879.3 500.5 L879.8 501.5 L880.3 502.4 L880.8 503.2 L881.3 503.9 L881.8 504.4 L882.3 505.0 L882.8 505.4 L883.3 505.7 L883.8 506.0 L884.3 506.3 L884.8 506.5 L885.3 506.6 L885.8 506.8 L886.3 506.9 L886.8 507.0 L887.3 507.0 L887.8 507.1 L888.8 507.1 L890.3 507.2 L896.3 507.2 L902.3 507.2 L908.3 507.2 L914.3 507.2 L920.3 507.2 L922.3 507.2 L923.3 507.1 L923.8 507.1 L924.3 507.0 L924.8 506.9 L925.3 506.8 L925.8 506.7 L926.3 506.5 L926.8 506.3 L927.3 506.0 L927.8 505.7 L928.3 505.3 L928.8 504.8 L929.3 504.3 L929.8 503.6 L930.3 502.9 L930.8 502.1 L931.3 501.2 L931.8 500.3 L932.3 499.3 L932.8 498.2 L933.3 497.1 L933.8 496.0 L934.3 495.0 L934.8 493.9 L935.3 493.0 L935.8 492.1 L936.3 491.4 L936.8 490.9 L937.3 490.4 L937.8 490.2 L938.8 490.3 L939.3 490.5 L939.8 490.9 L940.3 491.4 L940.8 492.0 L941.3 492.7 L941.8 493.5 L942.3 494.3 L942.8 495.2 L943.3 496.1 L943.8 497.0 L944.3 497.9 L944.8 498.9 L945.3 499.7 L945.8 500.6 L946.3 501.4 L946.8 502.1 L947.3 502.8 L947.8 503.5 L948.3 504.0 L948.8 504.5 L949.3 505.0 L949.8 505.4 L950.3 505.7 L950.8 506.0 L951.3 506.3 L951.8 506.5 L952.3 506.7 L952.8 506.8 L953.3 507.0 L953.8 507.1 L954.3 507.1 L954.8 507.2 L955.3 507.3 L955.8 507.3 L956.8 507.4 L958.3 507.4 L960.8 507.5 L965.8 507.5 L971.3 507.5 L976.8 507.6 L982.8 507.6 L988.8 507.7 L994.8 507.7 L1000.8 507.7 L1006.8 507.7 L1012.8 507.7 L1018.8 507.7 L1024.8 507.7 L1030.8 507.7 L1036.8 507.7 L1042.8 507.6 L1048.8 507.6 L1054.8 507.6 L1060.8 507.5 L1066.8 507.5 L1071.8 507.4 L1075.8 507.4 L1078.8 507.3 L1080.8 507.3 L1082.3 507.3 L1083.8 507.2 L1085.3 507.1 L1086.3 507.1 L1087.3 507.1 L1088.3 507.0 L1089.3 506.9 L1090.3 506.9 L1091.3 506.8 L1092.3 506.7 L1093.3 506.7 L1094.3 506.6 L1094.8 506.5 L1095.3 506.5 L1095.8 506.5 L1096.3 506.4 L1096.8 506.4 L1097.3 506.3 L1097.8 506.3 L1098.8 506.2 L1099.8 506.1 L1100.8 506.1 L1101.8 506.0 L1102.8 506.0 L1103.8 505.9 L1105.3 505.9 L1111.3 505.9 L1112.8 505.9 L1113.8 506.0 L1114.8 506.0 L1115.8 506.1 L1116.8 506.1 L1117.8 506.2 L1118.8 506.3 L1119.8 506.3 L1120.8 506.4 L1121.8 506.4 L1122.8 506.5 L1123.8 506.6 L1124.8 506.6 L1125.8 506.7 L1126.8 506.7 L1127.8 506.8 L1128.8 506.8 L1129.8 506.9 L1131.3 506.9 L1132.8 507.0 L1134.3 507.0 L1136.3 507.1 L1138.8 507.1 L1143.3 507.2 L1149.3 507.2 L1155.3 507.2 L1161.3 507.2 L1167.3 507.2 L1173.3 507.2 L1179.3 507.2 L1185.3 507.1 L1186.8 507.1 L1187.8 507.0 L1188.8 507.0 L1189.3 506.9 L1189.8 506.8 L1190.3 506.7 L1190.8 506.6 L1191.3 506.5 L1191.8 506.4 L1192.3 506.2 L1192.8 506.0 L1193.3 505.8 L1193.8 505.6 L1194.3 505.3 L1194.8 505.0 L1195.3 504.7 L1195.8 504.3 L1196.3 503.9 L1196.8 503.4 L1197.3 503.0 L1197.8 502.5 L1198.3 502.0 L1198.8 501.4 L1199.3 500.9 L1199.8 500.3 L1200.3 499.8 L1200.8 499.2 L1201.3 498.7 L1201.8 498.2 L1202.3 497.7 L1202.8 497.3 L1203.3 496.9 L1203.8 496.6 L1204.3 496.3 L1204.8 496.2 L1205.3 496.0 L1205.8 496.0 L1206.8 496.1 L1207.3 496.2 L1207.8 496.4 L1208.3 496.6 L1208.8 496.9 L1209.3 497.2 L1209.8 497.6 L1210.3 497.9 L1210.8 498.4 L1211.3 498.8 L1211.8 499.2 L1212.3 499.7 L1212.8 500.2 L1213.3 500.6 L1213.8 501.1 L1214.3 501.6 L1214.8 502.0 L1215.3 502.5 L1215.8 502.9 L1216.3 503.3 L1216.8 503.7 L1217.3 504.0 L1217.8 504.4 L1218.3 504.7 L1218.8 505.0 L1219.3 505.2 L1219.8 505.5 L1220.3 505.7 L1220.8 505.9 L1221.3 506.1 L1221.8 506.2 L1222.3 506.4 L1222.8 506.5 L1223.3 506.6 L1223.8 506.7 L1224.3 506.8 L1224.8 506.8 L1225.3 506.9 L1225.8 506.9 L1226.3 507.0 L1227.3 507.1 L1228.3 507.1 L1229.8 507.1 L1234.8 507.2 L1240.8 507.2 L1246.8 507.2 L1252.8 507.2 L1258.8 507.2 L1264.8 507.2 L1270.8 507.2 L1276.8 507.2 L1282.8 507.2 L1288.8 507.2 L1294.8 507.2 L1300.8 507.2 L1306.8 507.2 L1312.8 507.2 L1318.8 507.2 L1324.8 507.2 L1330.8 507.2 L1336.8 507.2 L1342.8 507.2 L1348.8 507.2 L1354.8 507.2 L1358.8 507.2" fill="none" stroke="#ff1e1e" stroke-width="1.12" stroke-linejoin="round"/>
<path d="M341.9 462.1V454.7" stroke="#ff1e1e" stroke-width="1.6"/>
<path d="M391.7 468.6V461.2" stroke="#ff1e1e" stroke-width="1.6"/>
<path d="M496.1 491.8V484.4" stroke="#ff1e1e" stroke-width="1.6"/>
<path d="M560.8 477.2V469.8" stroke="#ff1e1e" stroke-width="1.6"/>
<path d="M645.6 467.1V459.7" stroke="#ff1e1e" stroke-width="1.6"/>
<path d="M870.4 481.5V474.1" stroke="#ff1e1e" stroke-width="1.6"/>
<path d="M938.2 491.0V483.6" stroke="#ff1e1e" stroke-width="1.6"/>
<path d="M1205.8 497.0V489.6" stroke="#ff1e1e" stroke-width="1.6"/>
<path d="M320.8 500.2l14 14m0 -14l-14 14" stroke="#343434" stroke-width="1.7" fill="none"/>
<circle cx="327.8" cy="507.2" r="1.6" fill="#1f8f2f"/>
<path d="M347.0 500.2l14 14m0 -14l-14 14" stroke="#343434" stroke-width="1.7" fill="none"/>
<circle cx="354.0" cy="507.2" r="1.6" fill="#ff2020"/>
<path d="M381.8 503.2v8" stroke="#23882e" stroke-width="1.5"/>
<path d="M404.8 503.6v8" stroke="#ff2020" stroke-width="1.5"/>
<path d="M486.3 503.2v8" stroke="#23882e" stroke-width="1.5"/>
<path d="M508.0 503.6v8" stroke="#ff2020" stroke-width="1.5"/>
<path d="M550.6 503.2v8" stroke="#23882e" stroke-width="1.5"/>
<path d="M571.7 503.6v8" stroke="#ff2020" stroke-width="1.5"/>
<path d="M631.9 503.2v8" stroke="#23882e" stroke-width="1.5"/>
<path d="M666.7 503.6v8" stroke="#ff2020" stroke-width="1.5"/>
<path d="M852.4 503.2v8" stroke="#23882e" stroke-width="1.5"/>
<path d="M890.4 503.6v8" stroke="#ff2020" stroke-width="1.5"/>
<path d="M920.4 503.2v8" stroke="#23882e" stroke-width="1.5"/>
<path d="M955.3 503.6v8" stroke="#ff2020" stroke-width="1.5"/>
<path d="M1181.8 503.2v8" stroke="#23882e" stroke-width="1.5"/>
<path d="M1230.2 503.6v8" stroke="#ff2020" stroke-width="1.5"/>
<g font-family="'Liberation Sans',sans-serif" font-size="13.3px">
<g transform="translate(346.2 452.2) rotate(-90)"><text x="0" y="0" fill="#ff3b1e">3.324</text><text x="46.6" y="0" fill="#2a2aff" text-anchor="middle">1</text><text x="60.4" y="0" fill="#2a2aff" textLength="37.0" lengthAdjust="spacingAndGlyphs">α-BHC</text></g>
<g transform="translate(396.0 458.7) rotate(-90)"><text x="0" y="0" fill="#ff3b1e">3.895</text><text x="46.6" y="0" fill="#2a2aff" text-anchor="middle">2</text><text x="60.4" y="0" fill="#2a2aff" textLength="37.2" lengthAdjust="spacingAndGlyphs">β-BHC</text></g>
<g transform="translate(500.4 481.9) rotate(-90)"><text x="0" y="0" fill="#ff3b1e">5.092</text><text x="46.6" y="0" fill="#2a2aff" text-anchor="middle">3</text><text x="60.4" y="0" fill="#2a2aff" textLength="36.0" lengthAdjust="spacingAndGlyphs">γ-BHC</text></g>
<g transform="translate(565.1 467.3) rotate(-90)"><text x="0" y="0" fill="#ff3b1e">5.834</text><text x="46.6" y="0" fill="#2a2aff" text-anchor="middle">4</text><text x="60.4" y="0" fill="#2a2aff" textLength="36.8" lengthAdjust="spacingAndGlyphs">δ-BHC</text></g>
<g transform="translate(649.9 457.2) rotate(-90)"><text x="0" y="0" fill="#ff3b1e">6.806</text><text x="46.6" y="0" fill="#2a2aff" text-anchor="middle">5</text><text x="60.4" y="0" fill="#2a2aff" textLength="44.0" lengthAdjust="spacingAndGlyphs">PP-DDE</text></g>
<g transform="translate(874.7 471.6) rotate(-90)"><text x="0" y="0" fill="#ff3b1e">9.383</text><text x="46.6" y="0" fill="#2a2aff" text-anchor="middle">6</text><text x="60.4" y="0" fill="#2a2aff" textLength="46.6" lengthAdjust="spacingAndGlyphs">PP-DDD</text></g>
<g transform="translate(942.5 480.2) rotate(-90)"><text x="0" y="0" fill="#ff3b1e">10.160</text><text x="54.0" y="0" fill="#2a2aff" text-anchor="middle">7</text><text x="67.8" y="0" fill="#2a2aff" textLength="47.2" lengthAdjust="spacingAndGlyphs">OP-DDT</text></g>
<g transform="translate(1210.1 486.2) rotate(-90)"><text x="0" y="0" fill="#ff3b1e">13.229</text><text x="54.0" y="0" fill="#2a2aff" text-anchor="middle">8</text><text x="67.8" y="0" fill="#2a2aff" textLength="43.9" lengthAdjust="spacingAndGlyphs">PP-DDT</text></g>
</g>
</svg>
<div class="abs" style="left:0;top:559.9px;width:1392px;height:8.2px;background:#f0f0f0;border-top:2px solid #1e1e1e;border-bottom:1.7px solid #1e1e1e;border-left:1.6px solid #111;box-sizing:border-box"></div>
<div class="abs" style="left:0;top:568px;width:1392px;height:28px;background:#f0f0f0"></div>
<div class="abs" style="left:70.8px;top:594.7px;width:1322px;height:1.7px;background:#2a2a2a"></div>
<div class="tab" style="left:2.8px;top:569.6px;width:68.6px;height:26.6px;background:#f0f0f0;border-left:1.3px solid #6a6a6a;border-top:1.3px solid #555;border-right:1.5px solid #222;line-height:22px;text-indent:-2px">结果</div>
<div class="tab" style="left:71px;top:571.2px;width:67.4px;height:24.6px;background:#e1e1e1;border-top:1.3px solid #333;border-right:1.3px solid #222;line-height:20px;text-indent:-1.6px">总结</div>
<div class="tab" style="left:138.4px;top:571.2px;width:67.6px;height:24.6px;background:#e1e1e1;border-top:1.3px solid #333;border-right:1.3px solid #222;line-height:20px;text-indent:-1.6px">柱效</div>
<div class="abs" style="left:0;top:596.4px;width:4px;height:239px;background:#f1f1f1;border-left:0.8px solid #cdcdcd;box-sizing:border-box"></div>
<div class="abs" style="left:3.4px;top:596px;width:1.2px;height:18px;background:#555"></div>
<div class="abs" style="left:4.6px;top:596.4px;width:1388px;height:16.6px;background:#fff"></div>
<div class="abs red" style="left:687px;top:595.4px;font-family:'Liberation Serif',serif;font-size:14.6px;line-height:18px;font-weight:bold;transform:scaleX(0.765);transform-origin:0 0;white-space:nowrap">ESTD</div>
<div class="abs" style="left:4px;top:612.7px;width:1388px;height:1.5px;background:#1a1a1a"></div>
<div class="abs" style="left:6px;top:614.2px;width:1386px;height:221px;background:#f0f7ff"></div>
<div class="abs" style="left:3.7px;top:612.7px;width:2.4px;height:223px;background:#111"></div>
<div class="th" style="left:5.50px;top:614.0px;width:31.25px;height:39.9px"><div style="line-height:38px;margin-top:3.2px"></div></div>
<div class="th" style="left:36.75px;top:614.0px;width:137.50px;height:39.9px"><div style="line-height:38px;margin-top:3.2px">组份名</div></div>
<div class="th" style="left:174.25px;top:614.0px;width:87.50px;height:39.9px"><div style="line-height:38px;margin-top:3.2px">峰类别</div></div>
<div class="th" style="left:261.75px;top:614.0px;width:87.50px;height:39.9px"><div style="margin-top:4.8px">保留时间</div><div class="lat" style="line-height:14.6px">[min]</div></div>
<div class="th" style="left:349.25px;top:614.0px;width:87.50px;height:39.9px"><div style="margin-top:4.8px">面积</div><div class="lat" style="line-height:14.6px">[mV.s]</div></div>
<div class="th" style="left:436.75px;top:614.0px;width:87.50px;height:39.9px"><div style="margin-top:4.8px">高度</div><div class="lat" style="line-height:14.6px">[mV]</div></div>
<div class="th" style="left:524.25px;top:614.0px;width:87.35px;height:39.9px"><div style="margin-top:4.8px">开始时间</div><div class="lat" style="line-height:14.6px">[min]</div></div>
<div class="th" style="left:611.60px;top:614.0px;width:88.70px;height:39.9px"><div style="margin-top:4.8px">结束时间</div><div class="lat" style="line-height:14.6px">[min]</div></div>
<div class="rh" style="left:5.50px;top:653.9px;width:31.25px;height:20.0px">1</div>
<div class="td l red" style="left:36.75px;top:653.9px;width:137.50px;height:20.0px"><span class="gk">α</span>-BHC</div>
<div class="td l red" style="left:174.25px;top:653.9px;width:87.50px;height:20.0px"><span class="cj">单峰</span></div>
<div class="td r red" style="left:261.75px;top:653.9px;width:87.50px;height:20.0px">3.3241</div>
<div class="td r red" style="left:349.25px;top:653.9px;width:87.50px;height:20.0px">92.6314</div>
<div class="td r red" style="left:436.75px;top:653.9px;width:87.50px;height:20.0px">25.5039</div>
<div class="td r red" style="left:524.25px;top:653.9px;width:87.35px;height:20.0px">3.1625</div>
<div class="td r red" style="left:611.60px;top:653.9px;width:88.70px;height:20.0px">3.4625</div>
<div class="rh" style="left:5.50px;top:673.9px;width:31.25px;height:20.0px">2</div>
<div class="td l" style="left:36.75px;top:673.9px;width:137.50px;height:20.0px"><span class="gk">β</span>-BHC</div>
<div class="td l" style="left:174.25px;top:673.9px;width:87.50px;height:20.0px"><span class="cj">单峰</span></div>
<div class="td r" style="left:261.75px;top:673.9px;width:87.50px;height:20.0px">3.8949</div>
<div class="td r" style="left:349.25px;top:673.9px;width:87.50px;height:20.0px">84.7056</div>
<div class="td r" style="left:436.75px;top:673.9px;width:87.50px;height:20.0px">21.8657</div>
<div class="td r" style="left:524.25px;top:673.9px;width:87.35px;height:20.0px">3.7808</div>
<div class="td r" style="left:611.60px;top:673.9px;width:88.70px;height:20.0px">4.0449</div>
<div class="rh" style="left:5.50px;top:693.9px;width:31.25px;height:20.0px">3</div>
<div class="td l" style="left:36.75px;top:693.9px;width:137.50px;height:20.0px"><span class="gk">γ</span>-BHC</div>
<div class="td l" style="left:174.25px;top:693.9px;width:87.50px;height:20.0px"><span class="cj">单峰</span></div>
<div class="td r" style="left:261.75px;top:693.9px;width:87.50px;height:20.0px">5.0918</div>
<div class="td r" style="left:349.25px;top:693.9px;width:87.50px;height:20.0px">41.2415</div>
<div class="td r" style="left:436.75px;top:693.9px;width:87.50px;height:20.0px">9.0771</div>
<div class="td r" style="left:524.25px;top:693.9px;width:87.35px;height:20.0px">4.9793</div>
<div class="td r" style="left:611.60px;top:693.9px;width:88.70px;height:20.0px">5.2285</div>
<div class="rh" style="left:5.50px;top:713.9px;width:31.25px;height:20.0px">4</div>
<div class="td l" style="left:36.75px;top:713.9px;width:137.50px;height:20.0px"><span class="gk">δ</span>-BHC</div>
<div class="td l" style="left:174.25px;top:713.9px;width:87.50px;height:20.0px"><span class="cj">单峰</span></div>
<div class="td r" style="left:261.75px;top:713.9px;width:87.50px;height:20.0px">5.8345</div>
<div class="td r" style="left:349.25px;top:713.9px;width:87.50px;height:20.0px">81.9492</div>
<div class="td r" style="left:436.75px;top:713.9px;width:87.50px;height:20.0px">17.1191</div>
<div class="td r" style="left:524.25px;top:713.9px;width:87.35px;height:20.0px">5.7161</div>
<div class="td r" style="left:611.60px;top:713.9px;width:88.70px;height:20.0px">5.9587</div>
<div class="rh" style="left:5.50px;top:733.9px;width:31.25px;height:20.0px">5</div>
<div class="td l" style="left:36.75px;top:733.9px;width:137.50px;height:20.0px">PP-DDE</div>
<div class="td l" style="left:174.25px;top:733.9px;width:87.50px;height:20.0px"><span class="cj">单峰</span></div>
<div class="td r" style="left:261.75px;top:733.9px;width:87.50px;height:20.0px">6.8055</div>
<div class="td r" style="left:349.25px;top:733.9px;width:87.50px;height:20.0px">138.8204</div>
<div class="td r" style="left:436.75px;top:733.9px;width:87.50px;height:20.0px">22.6993</div>
<div class="td r" style="left:524.25px;top:733.9px;width:87.35px;height:20.0px">6.6488</div>
<div class="td r" style="left:611.60px;top:733.9px;width:88.70px;height:20.0px">7.0481</div>
<div class="rh" style="left:5.50px;top:753.9px;width:31.25px;height:20.0px">6</div>
<div class="td l" style="left:36.75px;top:753.9px;width:137.50px;height:20.0px">PP-DDD</div>
<div class="td l" style="left:174.25px;top:753.9px;width:87.50px;height:20.0px"><span class="cj">单峰</span></div>
<div class="td r" style="left:261.75px;top:753.9px;width:87.50px;height:20.0px">9.3827</div>
<div class="td r" style="left:349.25px;top:753.9px;width:87.50px;height:20.0px">115.5308</div>
<div class="td r" style="left:436.75px;top:753.9px;width:87.50px;height:20.0px">14.7509</div>
<div class="td r" style="left:524.25px;top:753.9px;width:87.35px;height:20.0px">9.1769</div>
<div class="td r" style="left:611.60px;top:753.9px;width:88.70px;height:20.0px">9.6120</div>
<div class="rh" style="left:5.50px;top:773.9px;width:31.25px;height:20.0px">7</div>
<div class="td l" style="left:36.75px;top:773.9px;width:137.50px;height:20.0px">OP-DDT</div>
<div class="td l" style="left:174.25px;top:773.9px;width:87.50px;height:20.0px"><span class="cj">单峰</span></div>
<div class="td r" style="left:261.75px;top:773.9px;width:87.50px;height:20.0px">10.1604</div>
<div class="td r" style="left:349.25px;top:773.9px;width:87.50px;height:20.0px">77.7204</div>
<div class="td r" style="left:436.75px;top:773.9px;width:87.50px;height:20.0px">9.4787</div>
<div class="td r" style="left:524.25px;top:773.9px;width:87.35px;height:20.0px">9.9570</div>
<div class="td r" style="left:611.60px;top:773.9px;width:88.70px;height:20.0px">10.3571</div>
<div class="rh" style="left:5.50px;top:793.9px;width:31.25px;height:20.0px">8</div>
<div class="td l" style="left:36.75px;top:793.9px;width:137.50px;height:20.0px">PP-DDT</div>
<div class="td l" style="left:174.25px;top:793.9px;width:87.50px;height:20.0px"><span class="cj">单峰</span></div>
<div class="td r" style="left:261.75px;top:793.9px;width:87.50px;height:20.0px">13.2286</div>
<div class="td r" style="left:349.25px;top:793.9px;width:87.50px;height:20.0px">65.1160</div>
<div class="td r" style="left:436.75px;top:793.9px;width:87.50px;height:20.0px">6.1944</div>
<div class="td r" style="left:524.25px;top:793.9px;width:87.35px;height:20.0px">12.9535</div>
<div class="td r" style="left:611.60px;top:793.9px;width:88.70px;height:20.0px">13.5078</div>
<div class="rh" style="left:5.50px;top:813.9px;width:31.25px;height:20.0px"></div>
<div class="td l" style="left:36.75px;top:813.9px;width:137.50px;height:20.0px"><span class="cj" style="top:-1.2px">总计</span></div>
<div class="td l" style="left:174.25px;top:813.9px;width:87.50px;height:20.0px"></div>
<div class="td r" style="left:261.75px;top:813.9px;width:87.50px;height:20.0px"></div>
<div class="td r" style="left:349.25px;top:813.9px;width:87.50px;height:20.0px">697.7151</div>
<div class="td r" style="left:436.75px;top:813.9px;width:87.50px;height:20.0px">126.6890</div>
<div class="td r" style="left:524.25px;top:813.9px;width:87.35px;height:20.0px"></div>
<div class="td r" style="left:611.60px;top:813.9px;width:88.70px;height:20.0px"></div>
<div class="abs" style="left:36.7px;top:671.7px;width:664.6px;height:1.5px;background:#3b95f2"></div>
</body></html>
